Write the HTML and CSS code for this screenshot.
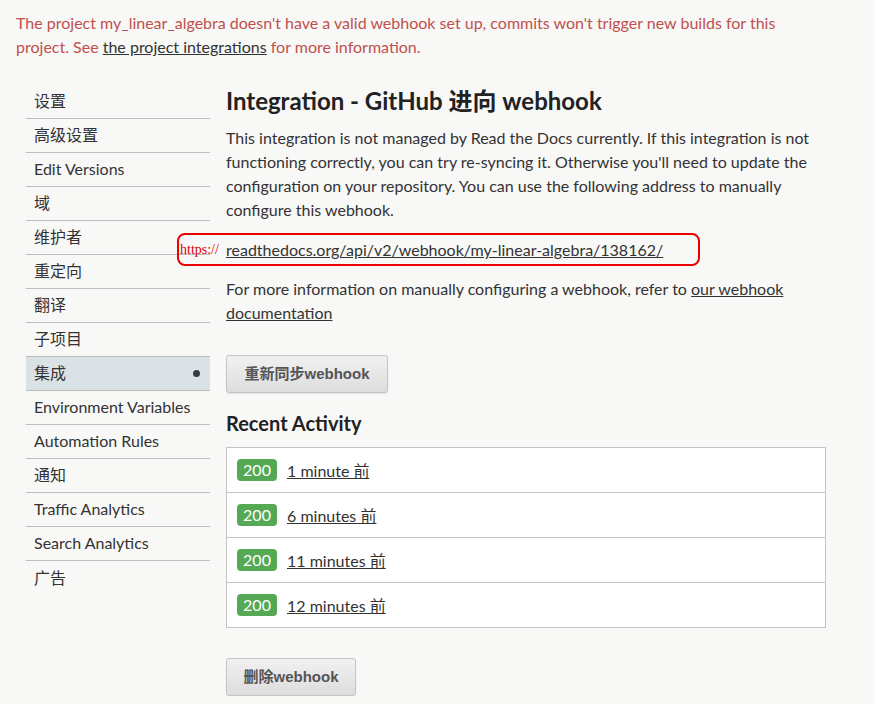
FILE: index.html
```html
<!DOCTYPE html>
<html lang="zh">
<head>
<meta charset="utf-8">
<link rel="stylesheet" href="styles.css">
</head>
<body>
<p class="warning">The project my_linear_algebra doesn't have a valid webhook set up, commits won't trigger new builds for this project. See <a href="#">the project integrations</a> for more information.</p>
<div class="layout">
  <nav class="sidebar">
    <a class="nav-item" href="#">设置</a>
    <a class="nav-item" href="#">高级设置</a>
    <a class="nav-item" href="#">Edit Versions</a>
    <a class="nav-item" href="#">域</a>
    <a class="nav-item" href="#">维护者</a>
    <a class="nav-item" href="#">重定向</a>
    <a class="nav-item" href="#">翻译</a>
    <a class="nav-item" href="#">子项目</a>
    <a class="nav-item active" href="#">集成<span class="dot"></span></a>
    <a class="nav-item" href="#">Environment Variables</a>
    <a class="nav-item" href="#">Automation Rules</a>
    <a class="nav-item" href="#">通知</a>
    <a class="nav-item" href="#">Traffic Analytics</a>
    <a class="nav-item" href="#">Search Analytics</a>
    <a class="nav-item last" href="#">广告</a>
  </nav>
  <main class="content">
    <h1 class="title">Integration - GitHub 进向 webhook</h1>
    <p class="text">This integration is not managed by Read the Docs currently. If this integration is not functioning correctly, you can try re-syncing it. Otherwise you'll need to update the configuration on your repository. You can use the following address to manually configure this webhook.</p>
    <div class="url-line">
      <span class="scheme">https://</span>
      <a href="#">readthedocs.org/api/v2/webhook/my-linear-algebra/138162/</a>
    </div>
    <p class="text">For more information on manually configuring a webhook, refer to <a href="#">our webhook documentation</a></p>
    <button class="btn btn-resync">重新同步webhook</button>
    <h2 class="subtitle">Recent Activity</h2>
    <ul class="activity">
      <li class="activity-row"><span class="badge">200</span><a href="#">1 minute 前</a></li>
      <li class="activity-row"><span class="badge">200</span><a href="#">6 minutes 前</a></li>
      <li class="activity-row"><span class="badge">200</span><a href="#">11 minutes 前</a></li>
      <li class="activity-row"><span class="badge">200</span><a href="#">12 minutes 前</a></li>
    </ul>
    <button class="btn btn-delete">删除webhook</button>
  </main>
</div>
</body>
</html>
```

FILE: styles.css
```css
* { box-sizing: border-box; }
html, body {
  margin: 0;
  padding: 0;
  background: #f8f8f7;
  font-family: Lato, "Noto Sans CJK SC", sans-serif;
  font-size: 16px;
  color: #333;
}
a { color: #333; text-decoration: underline; }

.warning {
  margin: 0;
  max-width: 810px;
  padding: 11px 16px 0 16px;
  line-height: 24px;
  color: #c0504e;
}
.warning a { color: #333; }

.layout {
  display: flex;
  gap: 16px;
  padding: 25px 0 0 26px;
}
.sidebar {
  width: 184px;
  flex: none;
  display: flex;
  flex-direction: column;
  margin-top: 1px;
}
.nav-item {
  display: flex;
  align-items: center;
  justify-content: space-between;
  height: 34px;
  padding: 0 10px 1px 8px;
  border-bottom: 1px solid #bdbdbd;
  text-decoration: none;
  color: #333;
  line-height: 32px;
}
.nav-item.last { border-bottom: none; }
.nav-item.active { background: #dbe2e6; }
.dot {
  width: 7px;
  height: 7px;
  border-radius: 50%;
  background: #333b47;
}

.content {
  width: 600px;
  flex: none;
}
.title {
  margin: 2px 0 10px 0;
  font-size: 24px;
  line-height: 30px;
  font-weight: 700;
  color: #222;
}
.text {
  margin: 0;
  line-height: 24px;
  color: #333;
}
.url-line {
  position: relative;
  margin: 16px 0 15px 0;
  line-height: 24px;
}
.url-line::before {
  content: "";
  position: absolute;
  left: -49px;
  top: -5px;
  width: 519px;
  height: 29px;
  border: 2px solid #ee0000;
  border-radius: 8px;
}
.scheme {
  position: absolute;
  left: -46px;
  top: 0;
  font-family: "Liberation Serif", serif;
  font-size: 14px;
  color: #dd0000;
}
.btn {
  display: block;
  height: 38px;
  padding: 0 15px 3px 15px;
  border: 1px solid #c4c4c4;
  border-radius: 3px;
  background: linear-gradient(#f1f1f1, #dddddd);
  box-shadow: 0 1px 1px rgba(0,0,0,0.08);
  font-family: "Liberation Sans", "Noto Sans CJK SC", sans-serif;
  font-weight: 700;
  font-size: 15px;
  color: #555;
}
.btn-resync { margin-top: 30px; width: 162px; }
.btn-delete { margin-top: 30px; width: 130px; }
.subtitle {
  margin: 16px 0 10px 0;
  font-size: 20px;
  line-height: 28px;
  font-weight: 700;
  color: #222;
}
.activity {
  list-style: none;
  margin: 0;
  padding: 0;
  background: #fff;
  border: 1px solid #c4c4c4;
}
.activity-row {
  display: flex;
  align-items: center;
  gap: 10px;
  height: 45px;
  padding: 0 10px 1px 10px;
  border-top: 1px solid #c4c4c4;
}
.activity-row:first-child { border-top: none; height: 44px; }
.badge {
  display: inline-block;
  width: 40px;
  height: 22px;
  line-height: 22px;
  text-align: center;
  border-radius: 4px;
  background: #55a955;
  color: #fff;
  font-size: 16px;
}
```
